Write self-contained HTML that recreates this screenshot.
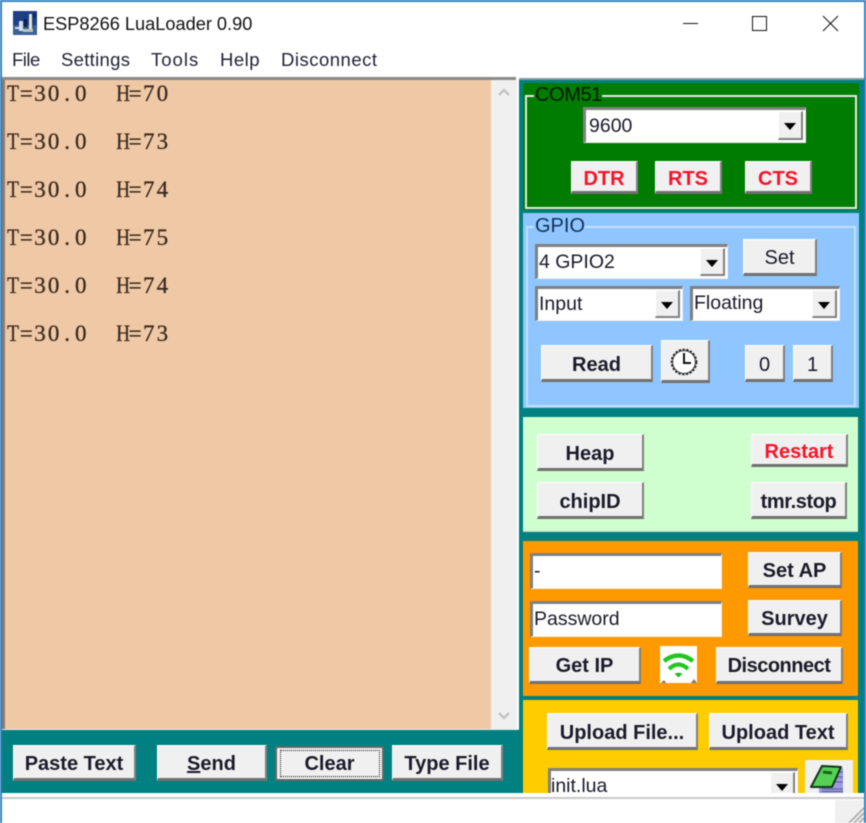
<!DOCTYPE html>
<html><head><meta charset="utf-8"><style>
html,body{margin:0;padding:0;width:866px;height:823px;overflow:hidden;background:#fff}
#r{position:relative;width:866px;height:823px;overflow:hidden;filter:blur(.4px);font-family:"Liberation Sans",sans-serif;color:#111}
#r div,#r svg{position:absolute;box-sizing:border-box}
.b{background:#f0f0f0;border-style:solid;border-width:1px 2px 3px 1px;border-color:#fff #808080 #707070 #fff;font-weight:bold;font-size:20px;text-align:center;color:#1a1a2a;display:flex;align-items:center;justify-content:center;padding-top:5px;white-space:nowrap}
.r{color:#f5142a}
.c{background:#fff;border-style:solid;border-width:3px 1px 1px 3px;border-color:#808080 #f0f0f0 #f0f0f0 #808080;font-size:19.5px;line-height:28px;padding-left:1px;color:#1a1a2a;white-space:nowrap}
.d{background:#f0f0f0;border-style:solid;border-width:1px 2px 2px 1px;border-color:#fff #808080 #808080 #fff;top:1px;right:2px;width:25px;bottom:2px}
.d::after{content:"";position:absolute;left:5px;top:11px;border-style:solid;border-width:7px 6px 0 6px;border-color:#000 transparent transparent transparent}
.m{top:49px;font-size:18.5px;color:#222238;white-space:nowrap}
.t{left:6px;font-family:"Liberation Serif",serif;font-size:23px;color:#3a2a20;white-space:pre;line-height:26px;-webkit-text-stroke:.3px #3a2a20}
.t i{display:inline-block;width:13.6px;text-align:center;font-style:normal}
.t i.h{transform:scaleX(.84)}
.g{border:2px solid #e8e8e8}
.l{font-size:20px;white-space:nowrap;line-height:22px;color:#0a1a10}
</style></head><body><div id="r">
<div style="left:0;top:0;width:866px;height:2px;background:#2f7fbf"></div>
<div style="left:0;top:0;width:2px;height:823px;background:#2f7fbf"></div>
<div style="right:0;top:0;width:2px;height:823px;background:#2f7fbf"></div>

<svg style="left:13px;top:11px" width="24" height="24" viewBox="0 0 24 24"><rect width="24" height="24" fill="#1c3f86"/><rect x="0" y="14" width="24" height="10" fill="#3a5f9a"/><rect x="6" y="10" width="4" height="10" fill="#d8dde8"/><rect x="2" y="16" width="6" height="2" fill="#d8e0e8"/><rect x="10" y="18" width="10" height="3" fill="#b8c8b8"/><rect x="16" y="3" width="3" height="15" fill="#e6e6c8"/><rect x="20" y="2" width="3" height="5" fill="#0f2a6a"/><rect x="11" y="8" width="3" height="8" fill="#0c2056"/></svg>
<div style="left:43px;top:12px;font-size:18.2px;line-height:24px;color:#111;white-space:nowrap">ESP8266 LuaLoader 0.90</div>
<div style="left:683px;top:23px;width:15px;height:1px;background:#111"></div>
<div style="left:752px;top:16px;width:15px;height:15px;border:1px solid #111"></div>
<svg style="left:822px;top:15px" width="17" height="17" viewBox="0 0 17 17"><path d="M1 1L16 16M16 1L1 16" stroke="#111" stroke-width="1" fill="none"/></svg>

<div class="m" style="left:12px;letter-spacing:-.5px">File</div>
<div class="m" style="left:61px;letter-spacing:.3px">Settings</div>
<div class="m" style="left:151px;letter-spacing:1px">Tools</div>
<div class="m" style="left:220px;letter-spacing:.5px">Help</div>
<div class="m" style="left:281px;letter-spacing:.5px">Disconnect</div>

<!-- text area -->
<div style="left:2px;top:77px;width:514px;height:3px;background:#8a8a8a"></div>
<div style="left:2px;top:80px;width:3px;height:649px;background:#8a7a70"></div>
<div style="left:5px;top:80px;width:486px;height:649px;background:#efc8a5"></div>
<div style="left:491px;top:80px;width:26px;height:649px;background:#f0f0f0"></div>
<svg style="left:497px;top:87px" width="14" height="10" viewBox="0 0 14 10"><path d="M2 8L7 3L12 8" stroke="#c4c4c4" stroke-width="2.4" fill="none"/></svg>
<svg style="left:497px;top:711px" width="14" height="10" viewBox="0 0 14 10"><path d="M2 2L7 7L12 2" stroke="#c4c4c4" stroke-width="2.4" fill="none"/></svg>
<div class="t" style="top:81px"><i class="h">T</i><i>=</i><i>3</i><i>0</i><i>.</i><i>0</i><i> </i><i> </i><i class="h">H</i><i>=</i><i>7</i><i>0</i></div>
<div class="t" style="top:129px"><i class="h">T</i><i>=</i><i>3</i><i>0</i><i>.</i><i>0</i><i> </i><i> </i><i class="h">H</i><i>=</i><i>7</i><i>3</i></div>
<div class="t" style="top:177px"><i class="h">T</i><i>=</i><i>3</i><i>0</i><i>.</i><i>0</i><i> </i><i> </i><i class="h">H</i><i>=</i><i>7</i><i>4</i></div>
<div class="t" style="top:225px"><i class="h">T</i><i>=</i><i>3</i><i>0</i><i>.</i><i>0</i><i> </i><i> </i><i class="h">H</i><i>=</i><i>7</i><i>5</i></div>
<div class="t" style="top:273px"><i class="h">T</i><i>=</i><i>3</i><i>0</i><i>.</i><i>0</i><i> </i><i> </i><i class="h">H</i><i>=</i><i>7</i><i>4</i></div>
<div class="t" style="top:321px"><i class="h">T</i><i>=</i><i>3</i><i>0</i><i>.</i><i>0</i><i> </i><i> </i><i class="h">H</i><i>=</i><i>7</i><i>3</i></div>

<!-- bottom teal -->
<div style="left:2px;top:729px;width:517px;height:1px;background:#dff0f0"></div>
<div style="left:2px;top:730px;width:517px;height:63px;background:#008080"></div>
<div class="b" style="left:13px;top:745px;width:123px;height:36px">Paste Text</div>
<div class="b" style="left:157px;top:745px;width:110px;height:36px"><span><u>S</u>end</span></div>
<div class="b" style="left:275px;top:746px;width:109px;height:35px;border-color:#666;border-width:2px;padding-top:1px"><span>Clear</span></div>
<div style="left:280px;top:750px;width:100px;height:27px;border:1px dotted #111"></div>
<div class="b" style="left:392px;top:745px;width:111px;height:36px">Type File</div>

<!-- right teal -->
<div style="left:519px;top:78px;width:345px;height:718px;background:#008080"></div>
<div style="left:519px;top:78px;width:345px;height:2px;background:#8a9a9a"></div>

<!-- COM -->
<div style="left:523px;top:83px;width:336px;height:127px;background:#007c00"></div>
<div class="g" style="left:525px;top:95px;width:332px;height:114px"></div>
<div style="left:534px;top:86px;width:68px;height:18px;background:#007c00"></div>
<div class="l" style="left:535px;top:84px;color:#021a02;letter-spacing:-.4px">COM51</div>
<div class="c" style="left:583px;top:107px;width:223px;height:36px"><span style="position:relative;top:2px;left:2px">9600</span><div class="d"></div></div>
<div class="b r" style="left:571px;top:161px;width:67px;height:33px">DTR</div>
<div class="b r" style="left:655px;top:161px;width:67px;height:33px">RTS</div>
<div class="b r" style="left:745px;top:161px;width:67px;height:33px">CTS</div>

<!-- GPIO -->
<div style="left:523px;top:213px;width:336px;height:195px;background:#8fc6ff"></div>
<div class="g" style="left:526px;top:226px;width:330px;height:181px;border-color:#c4dff8"></div>
<div style="left:534px;top:218px;width:50px;height:16px;background:#8fc6ff"></div>
<div class="l" style="left:535px;top:215px;color:#12305a">GPIO</div>
<div class="c" style="left:535px;top:244px;width:193px;height:35px"><span style="position:relative;top:1px;left:0">4 GPIO2</span><div class="d"></div></div>
<div class="b" style="left:743px;top:239px;width:74px;height:37px;font-weight:normal;padding:4px 0 0">Set</div>
<div class="c" style="left:535px;top:286px;width:148px;height:35px"><span style="position:relative;top:1px;left:0">Input</span><div class="d"></div></div>
<div class="c" style="left:690px;top:286px;width:150px;height:35px"><span style="position:relative;top:0;left:0">Floating</span><div class="d"></div></div>
<div class="b" style="left:541px;top:345px;width:112px;height:37px">Read</div>
<div class="b" style="left:661px;top:340px;width:49px;height:43px"></div>
<svg style="left:670px;top:348px" width="28" height="28" viewBox="0 0 28 28"><circle cx="14" cy="14" r="12.5" fill="#fff" stroke="#222" stroke-width="1.6" stroke-dasharray="2.4 1.4"/><circle cx="14" cy="14" r="11.4" fill="none" stroke="#333" stroke-width="1"/><path d="M14 5V15H21" stroke="#111" stroke-width="2" fill="none"/></svg>
<div class="b" style="left:745px;top:345px;width:40px;height:37px;font-weight:normal">0</div>
<div class="b" style="left:793px;top:345px;width:40px;height:37px;font-weight:normal">1</div>

<!-- mint -->
<div style="left:523px;top:417px;width:335px;height:115px;background:#cfffcf;border-bottom:1px solid #c8d4c8"></div>
<div class="b" style="left:537px;top:434px;width:107px;height:37px">Heap</div>
<div class="b r" style="left:751px;top:434px;width:97px;height:33px">Restart</div>
<div class="b" style="left:537px;top:482px;width:107px;height:37px">chipID</div>
<div class="b" style="left:751px;top:482px;width:96px;height:37px;letter-spacing:-.4px">tmr.stop</div>

<!-- orange -->
<div style="left:523px;top:541px;width:335px;height:155px;background:#ff9900"></div>
<div class="c" style="left:530px;top:553px;width:192px;height:36px"><span style="position:relative;top:1px;left:0">-</span></div>
<div class="c" style="left:530px;top:601px;width:192px;height:36px"><span style="position:relative;top:1px;left:0">Password</span></div>
<div class="b" style="left:748px;top:552px;width:94px;height:36px">Set AP</div>
<div class="b" style="left:748px;top:600px;width:94px;height:36px">Survey</div>
<div class="b" style="left:529px;top:647px;width:112px;height:37px;padding-top:4px">Get IP</div>
<div style="left:660px;top:646px;width:37px;height:37px;background:#fff"></div>
<svg style="left:660px;top:646px" width="37" height="37" viewBox="0 0 37 37"><path d="M4 15Q18.5 4 33 15" stroke="#1fc81f" stroke-width="4.4" fill="none"/><path d="M9 23Q18.5 14 28 23" stroke="#1fc81f" stroke-width="4" fill="none"/><path d="M14.5 27.5Q18.5 26 22.5 27.5L18.5 31.5Z" fill="#1fb81f"/><path d="M1 37L4 34L6 37ZM31 37L34 33L37 37Z" fill="#777"/></svg>
<div class="b" style="left:716px;top:647px;width:127px;height:37px;letter-spacing:-.5px;padding-top:4px">Disconnect</div>

<!-- yellow -->
<div style="left:523px;top:700px;width:335px;height:96px;background:#ffcc00"></div>
<div class="b" style="left:547px;top:713px;width:151px;height:37px">Upload File...</div>
<div class="b" style="left:709px;top:713px;width:139px;height:37px">Upload Text</div>
<div class="c" style="left:548px;top:768px;width:250px;height:30px;overflow:hidden"><span style="position:relative;top:1px;left:-1px">init.lua</span><div class="d" style="bottom:auto;height:32px"></div></div>
<div style="left:805px;top:760px;width:48px;height:38px;background:#f0f0f0"></div>
<svg style="left:808px;top:762px" width="40" height="36" viewBox="0 0 40 36"><path d="M20 6H35V31H11V25Z" fill="#9a9ae0"/><path d="M14 27H35M14 29.5H35M26 20H35M28 15H35M30 10H35" stroke="#5a5a90" stroke-width="1"/><path d="M14 4L33 5L24 25H3Z" fill="#55d055" stroke="#153515" stroke-width="2" stroke-linejoin="round"/><path d="M15 10L24 11" stroke="#156515" stroke-width="3"/></svg>

<!-- status -->
<div style="left:2px;top:793px;width:862px;height:30px;background:#fff"></div>
<div style="left:2px;top:797px;width:862px;height:2px;background:#c8c8c8"></div>
<div style="left:835px;top:800px;width:29px;height:23px;background:#f0f0f0"></div>
<svg style="left:846px;top:804px" width="18" height="19" viewBox="0 0 18 19"><path d="M3 19L18 4M8 19L18 9M13 19L18 14" stroke="#a8a8a8" stroke-width="1.6"/></svg>
</div></body></html>
